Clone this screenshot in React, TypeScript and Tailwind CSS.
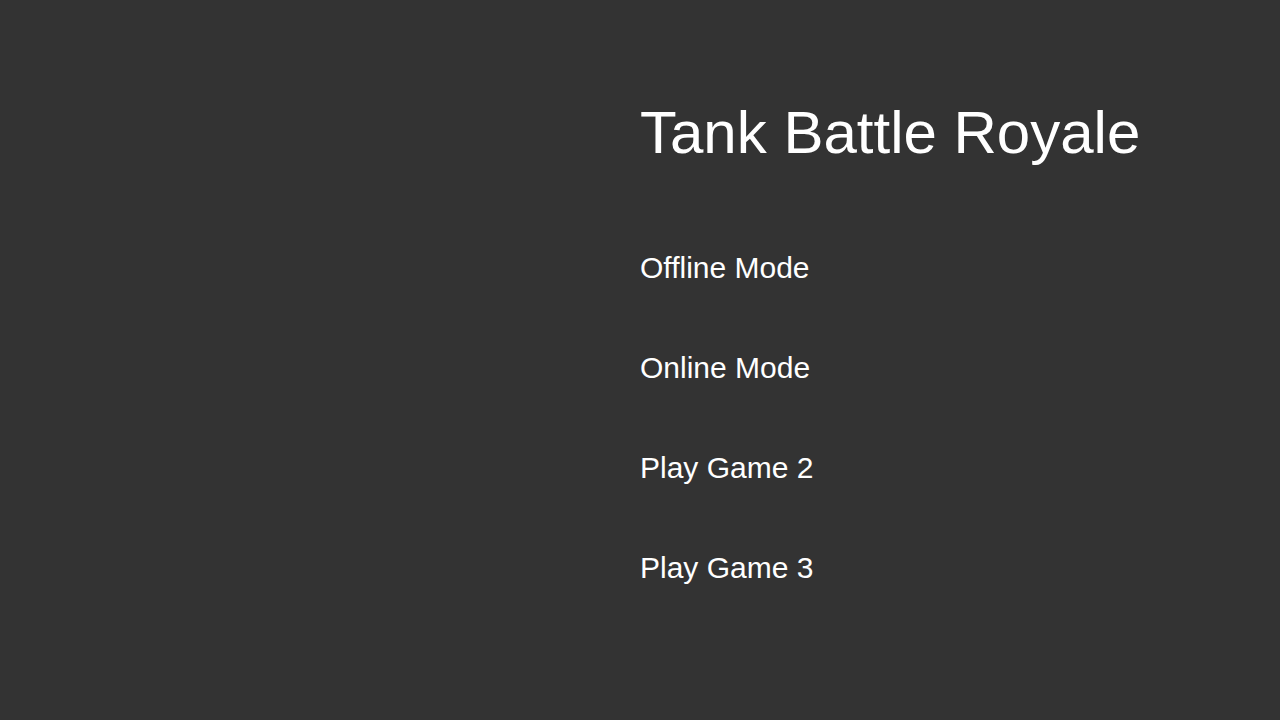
import { useState } from 'react';

const modes = ['Offline Mode', 'Online Mode', 'Play Game 2', 'Play Game 3'];

export default function App() {
  const [selected, setSelected] = useState<string | null>(null);

  return (
    <div
      className="grid h-screen w-full grid-cols-2 bg-[#333333] text-white"
      style={{ fontFamily: '"Liberation Sans", Arial, sans-serif' }}
    >
      <div />

      <div className="flex flex-col pt-[98px]">
        <h1 className="text-[60px] leading-[69px] font-normal">Tank Battle Royale</h1>

        <ul className="mt-[83px] flex flex-col gap-[65px]">
          {modes.map((m) => (
            <li key={m}>
              <button
                onClick={() => setSelected(m)}
                className={`text-[30px] leading-[35px] ${selected === m ? 'text-gray-300' : 'text-white'}`}
              >
                {m}
              </button>
            </li>
          ))}
        </ul>
      </div>
    </div>
  );
}
